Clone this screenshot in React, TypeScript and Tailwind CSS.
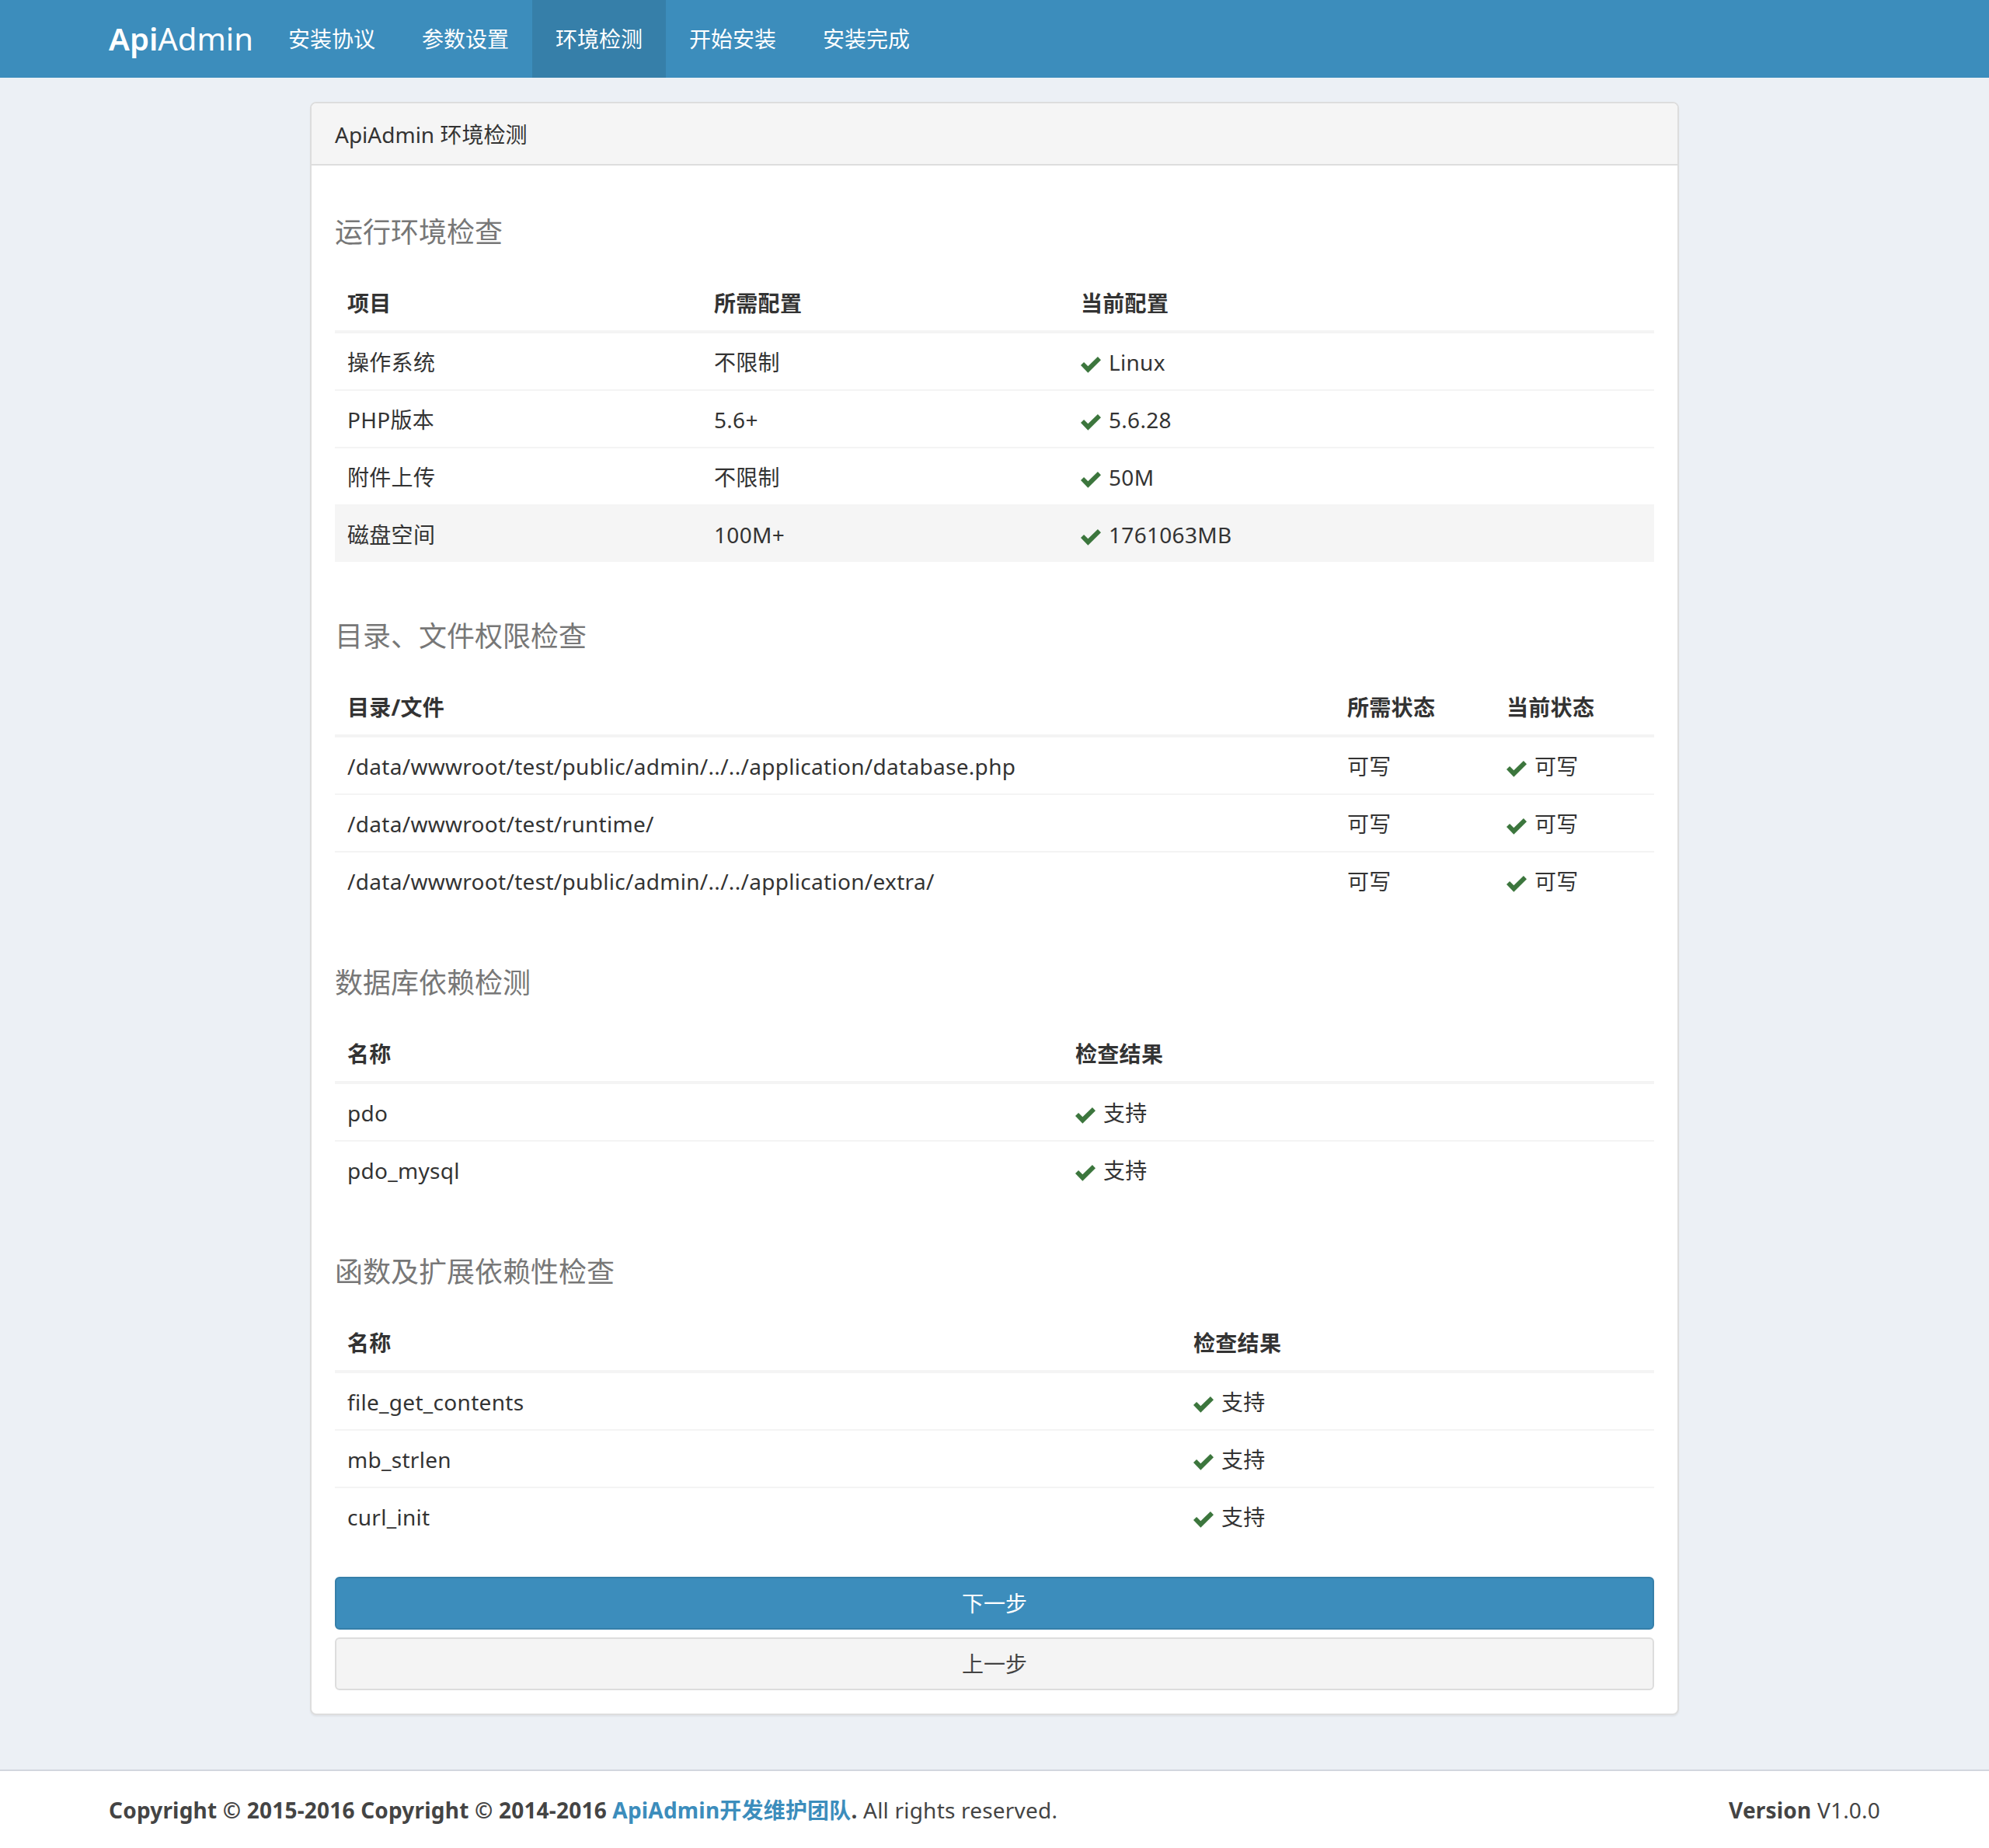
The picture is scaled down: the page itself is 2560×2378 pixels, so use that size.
import React from 'react';

const navItems = ['安装协议', '参数设置', '环境检测', '开始安装', '安装完成'];

type Col = { label: string; width: string };

const envCols: Col[] = [
  { label: '项目', width: 'w-[472px]' },
  { label: '所需配置', width: 'w-[472px]' },
  { label: '当前配置', width: 'w-auto' },
];

const envRows = [
  ['操作系统', '不限制', 'Linux'],
  ['PHP版本', '5.6+', '5.6.28'],
  ['附件上传', '不限制', '50M'],
  ['磁盘空间', '100M+', '1761063MB'],
];

const dirCols: Col[] = [
  { label: '目录/文件', width: 'w-[1287px]' },
  { label: '所需状态', width: 'w-[205px]' },
  { label: '当前状态', width: 'w-auto' },
];

const dirRows = [
  ['/data/wwwroot/test/public/admin/../../application/database.php', '可写', '可写'],
  ['/data/wwwroot/test/runtime/', '可写', '可写'],
  ['/data/wwwroot/test/public/admin/../../application/extra/', '可写', '可写'],
];

const dbCols: Col[] = [
  { label: '名称', width: 'w-[937px]' },
  { label: '检查结果', width: 'w-auto' },
];

const dbRows = [
  ['pdo', '支持'],
  ['pdo_mysql', '支持'],
];

const fnCols: Col[] = [
  { label: '名称', width: 'w-[1089px]' },
  { label: '检查结果', width: 'w-auto' },
];

const fnRows = [
  ['file_get_contents', '支持'],
  ['mb_strlen', '支持'],
  ['curl_init', '支持'],
];

function Ok() {
  return (
    <svg
      viewBox="0 0 25 20"
      className="inline-block w-[26px] h-[21px] mr-[10px] align-[-3px] fill-[#3c763d]"
    >
      <path d="M0 10.6 L3.9 6.7 L9 11.8 L21.1 0 L25 3.9 L9 19.9 Z" />
    </svg>
  );
}

function SectionTitle({ children }: { children: React.ReactNode }) {
  return (
    <h4 className="mt-[36px] mb-[34px] text-[36px] leading-[40px] text-[#777] font-normal">
      {children}
    </h4>
  );
}

function CheckTable({
  cols,
  rows,
  highlight,
}: {
  cols: Col[];
  rows: string[][];
  highlight?: number;
}) {
  const last = cols.length - 1;
  return (
    <table className="w-full table-fixed border-collapse text-[28px] leading-[40px] text-[#333] tracking-[0.3px]">
      <thead>
        <tr>
          {cols.map((c) => (
            <th
              key={c.label}
              className={`${c.width} px-4 pt-[17px] pb-[15px] text-left font-bold border-b-4 border-[#f4f4f4]`}
            >
              {c.label}
            </th>
          ))}
        </tr>
      </thead>
      <tbody>
        {rows.map((row, i) => (
          <tr key={i} className={i === highlight ? 'bg-[#f5f5f5]' : ''}>
            {row.map((cell, j) => (
              <td
                key={j}
                className="px-4 pt-[17px] pb-[15px] border-t-2 border-[#f4f4f4] whitespace-nowrap"
              >
                {j === last && <Ok />}
                {cell}
              </td>
            ))}
          </tr>
        ))}
      </tbody>
    </table>
  );
}

function Section({
  title,
  children,
  first,
}: {
  title: string;
  children: React.ReactNode;
  first?: boolean;
}) {
  return (
    <section className={first ? '' : 'pt-[40px]'}>
      <SectionTitle>{title}</SectionTitle>
      {children}
    </section>
  );
}

export default function App() {
  return (
    <div className="font-['Noto_Sans','Noto_Sans_CJK_SC',sans-serif] text-[#333]">
      <header className="h-[100px] bg-[#3c8dbc]">
        <div className="mx-auto flex h-full w-[2340px]">
          <a className="w-[231px] shrink-0 px-[30px] text-[40px] leading-[100px] text-white whitespace-nowrap">
            <b className="font-semibold">Api</b>Admin
          </a>
          {navItems.map((item) => (
            <a
              key={item}
              className={`px-[30px] text-[28px] leading-[100px] text-white ${
                item === '环境检测' ? 'bg-[#367fa9]' : ''
              }`}
            >
              {item}
            </a>
          ))}
        </div>
      </header>

      <main className="bg-[#ecf0f5] pt-[31px] pb-[70px]">
        <div className="mx-auto w-[1762px] rounded-[8px] border-2 border-[#ddd] bg-white shadow-[0_2px_2px_rgba(0,0,0,0.05)]">
          <div className="rounded-t-[6px] border-b-2 border-[#ddd] bg-[#f5f5f5] px-[30px] pt-[20px] pb-[18px] text-[28px] leading-[40px] text-[#333]">
            ApiAdmin 环境检测
          </div>
          <div className="p-[30px]">
            <Section title="运行环境检查" first>
              <CheckTable cols={envCols} rows={envRows} highlight={3} />
            </Section>
            <Section title="目录、文件权限检查">
              <CheckTable cols={dirCols} rows={dirRows} />
            </Section>
            <Section title="数据库依赖检测">
              <CheckTable cols={dbCols} rows={dbRows} />
            </Section>
            <Section title="函数及扩展依赖性检查">
              <CheckTable cols={fnCols} rows={fnRows} />
            </Section>

            <div className="mt-[42px] flex flex-col gap-[10px]">
              <button className="h-[68px] w-full rounded-[6px] border-2 border-[#367fa9] bg-[#3c8dbc] text-[28px] leading-[40px] text-white">
                下一步
              </button>
              <button className="h-[68px] w-full rounded-[6px] border-2 border-[#ddd] bg-[#f4f4f4] text-[28px] leading-[40px] text-[#444]">
                上一步
              </button>
            </div>
          </div>
        </div>
      </main>

      <footer className="border-t-2 border-[#d2d6de] bg-white py-[30px] text-[28px] leading-[40px] text-[#444] tracking-[0.2px]">
        <div className="mx-auto flex w-[2340px] justify-between px-[30px]">
          <div>
            <strong>
              Copyright © 2015-2016 Copyright © 2014-2016{' '}
              <a className="text-[#3c8dbc]">ApiAdmin开发维护团队</a>.
            </strong>{' '}
            All rights reserved.
          </div>
          <div>
            <b>Version</b> V1.0.0
          </div>
        </div>
      </footer>
    </div>
  );
}
